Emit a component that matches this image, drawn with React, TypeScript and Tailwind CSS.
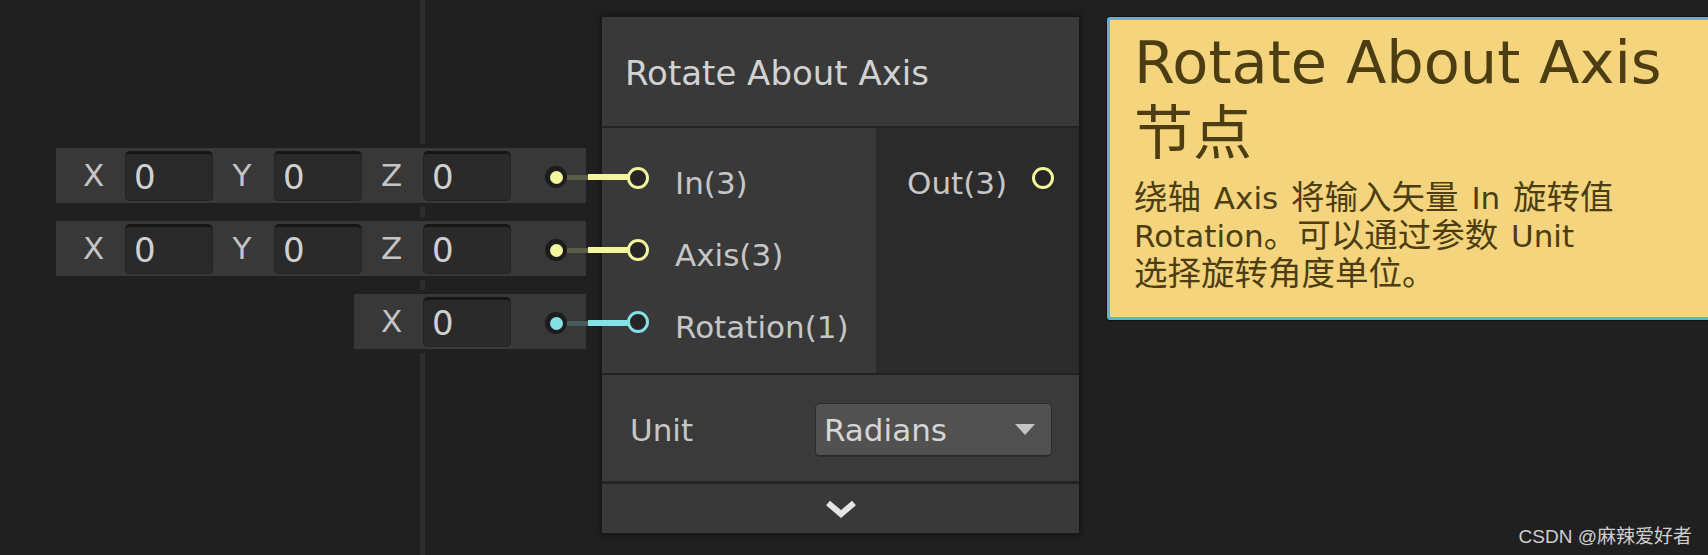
import React from 'react';

const YELLOW = '#f4f59c';
const CYAN = '#85e1e6';

function Field() {
  return (
    <div className="w-[88px] h-[50px] shrink-0 rounded-[5px] bg-[#2a2a2a] border border-[#232323] border-t-[3px] border-t-[#161616] flex items-center pl-[8px] text-[34px] text-[#d0d0d0] leading-none">
      0
    </div>
  );
}

function Axis({ label, first }: { label: string; first?: boolean }) {
  return (
    <>
      <span className={`w-[20px] text-center text-[31px] text-[#c4c4c4] leading-none ${first ? '' : 'ml-[19px]'}`}>
        {label}
      </span>
      <div className="ml-[22px]">
        <Field />
      </div>
    </>
  );
}

// small dot at the end of a row, with the wire running into the node
function Dot({ color, dim }: { color: string; dim: string }) {
  return (
    <div className="relative ml-auto mr-[19px] mt-[3px] w-[22px] h-[22px] rounded-full bg-[#1c1c1c] flex items-center justify-center">
      <div className="w-[13px] h-[13px] rounded-full" style={{ background: color }} />
      <div className="absolute left-[22px] top-[8.5px] w-[21px] h-[5px]" style={{ background: dim }} />
      <div className="absolute left-[43px] top-[8px] w-[42px] h-[6px]" style={{ background: color }} />
    </div>
  );
}

function VecRow({ axes, color, dim }: { axes: string[]; color: string; dim: string }) {
  return (
    <div className="relative flex items-center h-[55px] bg-[#383838] ring-4 ring-[#202020] pl-[27px]">
      {axes.map((a, i) => (
        <Axis key={a} label={a} first={i === 0} />
      ))}
      <Dot color={color} dim={dim} />
    </div>
  );
}

function Port({ color }: { color: string }) {
  return (
    <div
      className="relative z-10 w-[22px] h-[22px] shrink-0 rounded-full border-[3px] bg-[#262626]"
      style={{ borderColor: color }}
    />
  );
}

function InPort({ label, color }: { label: string; color: string }) {
  return (
    <div className="h-[72px] flex items-center pl-[25px]">
      <Port color={color} />
      <span className="ml-[26px] mt-[11px] text-[31px] leading-none text-[#c6c6c6] whitespace-nowrap">{label}</span>
    </div>
  );
}

// CJK runs render a little larger than the latin text in the reference
function C({ children }: { children: React.ReactNode }) {
  return <span className="text-[33.5px]">{children}</span>;
}

export default function App() {
  return (
    <div className="relative w-[1708px] h-[555px] overflow-hidden bg-[#202020] font-['DejaVu_Sans','Noto_Sans_CJK_SC',sans-serif]">
      {/* grid line behind the property rows */}
      <div className="absolute left-[420px] top-0 w-[5px] h-full bg-[#2d2d2d]" />

      <div className="flex items-start pl-[56px] pt-[17px]">
        {/* inline value fields */}
        <div className="w-[530px] shrink-0 mt-[131px] flex flex-col items-end gap-[18px]">
          <div className="w-full">
            <VecRow axes={['X', 'Y', 'Z']} color={YELLOW} dim="#5b5d48" />
          </div>
          <div className="w-full">
            <VecRow axes={['X', 'Y', 'Z']} color={YELLOW} dim="#5b5d48" />
          </div>
          <div className="w-[232px]">
            <VecRow axes={['X']} color={CYAN} dim="#465a5c" />
          </div>
        </div>

        {/* node */}
        <div className="ml-[16px] w-[477px] h-[516px] shrink-0 flex flex-col bg-[#393939] shadow-[0_0_4px_3px_rgba(0,0,0,0.25)]">
          <div className="h-[111px] flex items-center pl-[23px] pt-[3px] border-b-2 border-[#232323]">
            <span className="text-[34px] leading-none text-[#d2d2d2] whitespace-nowrap">Rotate About Axis</span>
          </div>
          <div className="h-[247px] flex border-b-2 border-[#232323]">
            <div className="w-[275px] pt-[14px] border-r border-[#2a2a2a]">
              <InPort label="In(3)" color={YELLOW} />
              <InPort label="Axis(3)" color={YELLOW} />
              <InPort label="Rotation(1)" color={CYAN} />
            </div>
            <div className="flex-1 bg-[#2b2b2b] pt-[14px]">
              <div className="h-[72px] flex items-center pl-[30px] pr-[25px]">
                <span className="mt-[11px] text-[31px] leading-none text-[#c6c6c6]">Out(3)</span>
                <div className="ml-auto">
                  <Port color={YELLOW} />
                </div>
              </div>
            </div>
          </div>
          <div className="h-[109px] flex items-center pl-[28px] pr-[27px] pt-[4px] border-b-[3px] border-[#232323] bg-[#3a3a3a]">
            <span className="mt-[1px] text-[31px] leading-none text-[#c6c6c6]">Unit</span>
            <div className="ml-auto w-[237px] h-[54px] rounded-[5px] bg-[#515151] border border-[#2c2c2c] border-b-2 flex items-center pl-[8px] pr-[16px]">
              <span className="mt-[1px] text-[31px] leading-none text-[#d6d6d6]">Radians</span>
              <svg className="ml-auto" width="20" height="11" viewBox="0 0 20 11">
                <polygon points="0,0 20,0 10,11" fill="#c4c4c4" />
              </svg>
            </div>
          </div>
          <div className="flex-1 flex items-center justify-center">
            <svg width="32" height="18" viewBox="0 0 32 18">
              <polyline points="3,3 16,14 29,3" fill="none" stroke="#e4e4e4" strokeWidth="6" />
            </svg>
          </div>
        </div>

        {/* tooltip */}
        <div className="ml-[28px] w-[640px] h-[303px] shrink-0 rounded-[3px] border-[3px] border-[#62acdf] ring-1 ring-[#141414] bg-[#f4d47c] pl-[24px] pt-[7px] text-[#4c3e12] whitespace-nowrap">
          <div className="text-[59px] leading-[71px]">
            Rotate About Axis
            <br />
            节点
          </div>
          <div className="mt-[10px] text-[31px] leading-[38px] [word-spacing:3px]">
            <C>绕轴</C> Axis <C>将输入矢量</C> In <C>旋转值</C>
            <br />
            Rotation<C>。可以通过参数</C> Unit
            <br />
            <C>选择旋转角度单位。</C>
          </div>
        </div>
      </div>

      <div className="absolute right-[16px] bottom-[9px] text-[19px] leading-none text-[#cfcfcf] font-['Liberation_Sans','Noto_Sans_CJK_SC',sans-serif]">
        CSDN @麻辣爱好者
      </div>
    </div>
  );
}
